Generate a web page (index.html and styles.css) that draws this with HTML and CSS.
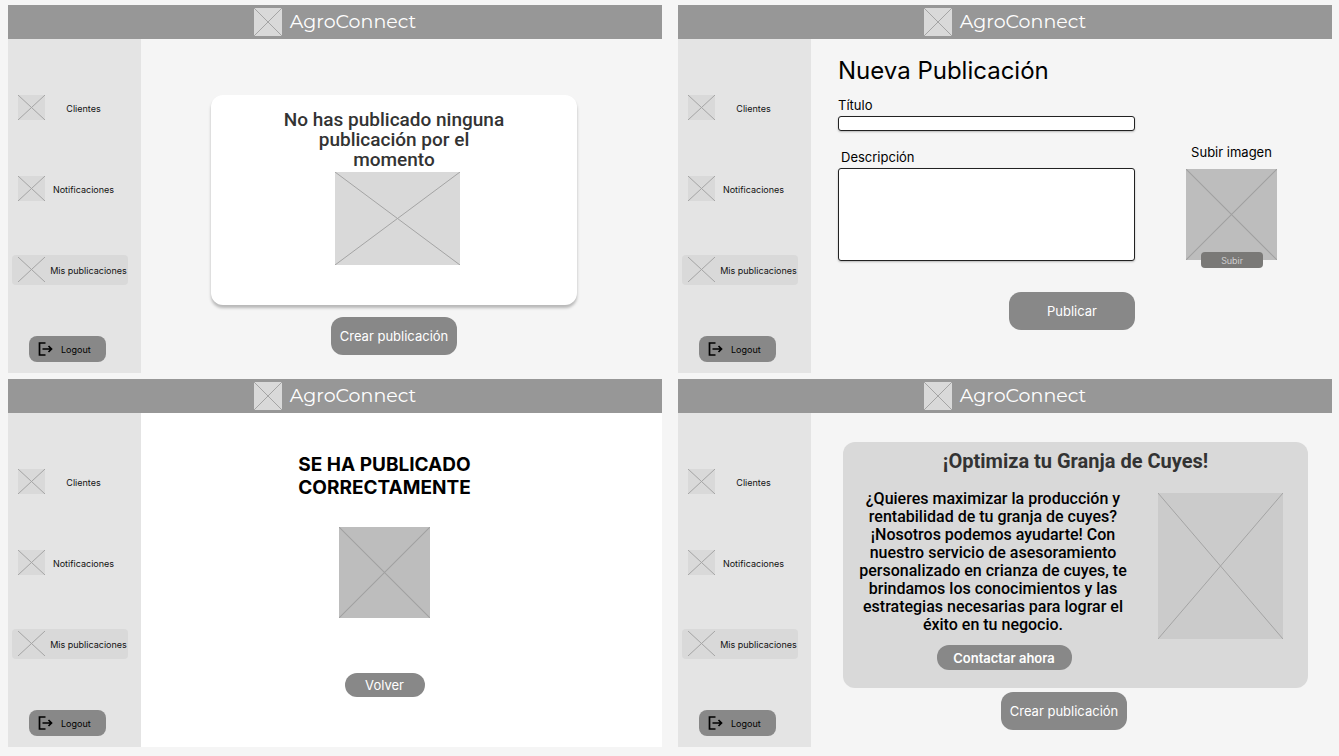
FILE: index.html
```html
<!DOCTYPE html>
<html lang="es">
<head>
<meta charset="utf-8">
<title>AgroConnect</title>
<link rel="stylesheet" href="styles.css">
</head>
<body>
<svg class="sprite" aria-hidden="true">
  <symbol id="cross" viewBox="0 0 100 100" preserveAspectRatio="none">
    <path d="M0 0L100 100M100 0L0 100" fill="none" stroke="currentColor" vector-effect="non-scaling-stroke"/>
  </symbol>
  <symbol id="logout" viewBox="0 0 14 14">
    <path d="M7 1H1V13H7M4 7H13M10 4L13 7L10 10" fill="none" stroke="currentColor" stroke-width="1.7"/>
  </symbol>
</svg>
<div class="board">
  <section class="screen">
    <header class="topbar"><svg class="ph logo"><use href="#cross"/></svg><span class="brand">AgroConnect</span></header>
    <nav class="sidebar">
      <a class="item" href="#"><svg class="ph thumb"><use href="#cross"/></svg><span class="item-label">Clientes</span></a>
      <a class="item" href="#"><svg class="ph thumb"><use href="#cross"/></svg><span class="item-label">Notificaciones</span></a>
      <a class="item active" href="#"><svg class="ph thumb"><use href="#cross"/></svg><span class="item-label">Mis publicaciones</span></a>
      <button class="logout" type="button"><svg class="logout-icon"><use href="#logout"/></svg>Logout</button>
    </nav>
    <main class="content empty">
      <div class="empty-card">
        <h2 class="empty-title">No has publicado ninguna<br>publicación por el<br>momento</h2>
        <svg class="ph empty-image"><use href="#cross"/></svg>
      </div>
      <button class="btn" type="button">Crear publicación</button>
    </main>
  </section>

  <section class="screen">
    <header class="topbar"><svg class="ph logo"><use href="#cross"/></svg><span class="brand">AgroConnect</span></header>
    <nav class="sidebar">
      <a class="item" href="#"><svg class="ph thumb"><use href="#cross"/></svg><span class="item-label">Clientes</span></a>
      <a class="item" href="#"><svg class="ph thumb"><use href="#cross"/></svg><span class="item-label">Notificaciones</span></a>
      <a class="item active" href="#"><svg class="ph thumb"><use href="#cross"/></svg><span class="item-label">Mis publicaciones</span></a>
      <button class="logout" type="button"><svg class="logout-icon"><use href="#logout"/></svg>Logout</button>
    </nav>
    <main class="content">
      <form class="form">
        <div class="fields">
          <h1 class="form-title">Nueva Publicación</h1>
          <label class="label" for="titulo">Título</label>
          <input class="field" id="titulo" type="text">
          <label class="label label-desc" for="descripcion">Descripción</label>
          <textarea class="field area" id="descripcion"></textarea>
          <button class="btn publish" type="button">Publicar</button>
        </div>
        <div class="upload">
          <span class="label">Subir imagen</span>
          <div class="upload-box">
            <svg class="ph dark square"><use href="#cross"/></svg>
            <button class="upload-btn" type="button">Subir</button>
          </div>
        </div>
      </form>
    </main>
  </section>

  <section class="screen">
    <header class="topbar"><svg class="ph logo"><use href="#cross"/></svg><span class="brand">AgroConnect</span></header>
    <nav class="sidebar">
      <a class="item" href="#"><svg class="ph thumb"><use href="#cross"/></svg><span class="item-label">Clientes</span></a>
      <a class="item" href="#"><svg class="ph thumb"><use href="#cross"/></svg><span class="item-label">Notificaciones</span></a>
      <a class="item active" href="#"><svg class="ph thumb"><use href="#cross"/></svg><span class="item-label">Mis publicaciones</span></a>
      <button class="logout" type="button"><svg class="logout-icon"><use href="#logout"/></svg>Logout</button>
    </nav>
    <main class="content done">
      <h2 class="done-title">SE HA PUBLICADO<br>CORRECTAMENTE</h2>
      <svg class="ph dark square"><use href="#cross"/></svg>
      <button class="pill back" type="button">Volver</button>
    </main>
  </section>

  <section class="screen">
    <header class="topbar"><svg class="ph logo"><use href="#cross"/></svg><span class="brand">AgroConnect</span></header>
    <nav class="sidebar">
      <a class="item" href="#"><svg class="ph thumb"><use href="#cross"/></svg><span class="item-label">Clientes</span></a>
      <a class="item" href="#"><svg class="ph thumb"><use href="#cross"/></svg><span class="item-label">Notificaciones</span></a>
      <a class="item active" href="#"><svg class="ph thumb"><use href="#cross"/></svg><span class="item-label">Mis publicaciones</span></a>
      <button class="logout" type="button"><svg class="logout-icon"><use href="#logout"/></svg>Logout</button>
    </nav>
    <main class="content post">
      <article class="post-card">
        <h2 class="post-title">¡Optimiza tu Granja de Cuyes!</h2>
        <div class="post-body">
          <div class="post-copy">
            <p class="post-text">¿Quieres maximizar la producción y rentabilidad de tu granja de cuyes? ¡Nosotros podemos ayudarte! Con nuestro servicio de asesoramiento personalizado en crianza de cuyes, te brindamos los conocimientos y las estrategias necesarias para lograr el éxito en tu negocio.</p>
            <button class="pill contact" type="button">Contactar ahora</button>
          </div>
          <svg class="ph mid post-image"><use href="#cross"/></svg>
        </div>
      </article>
      <button class="btn" type="button">Crear publicación</button>
    </main>
  </section>
</div>
</body>
</html>
```
FILE: styles.css
```css
* { box-sizing: border-box; }

body {
  margin: 0;
  background: #f5f5f5;
  color: #000;
  font-family: Inter, "Liberation Sans", sans-serif;
}

h1, h2, p { margin: 0; }
button { border: 0; padding: 0; font-family: inherit; cursor: pointer; }
.sprite { position: absolute; width: 0; height: 0; }

.board {
  display: grid;
  grid-template-columns: 1fr 1fr;
  grid-auto-rows: minmax(368px, auto);
  gap: 6px 16px;
  padding: 5px 7px 9px 8px;
}

.screen {
  display: grid;
  grid-template-columns: 133px 1fr;
  grid-template-rows: auto 1fr;
}

.topbar {
  grid-column: 1 / -1;
  display: flex;
  align-items: center;
  justify-content: center;
  gap: 8px;
  padding: 3px 0;
  background: #979797;
}
.brand {
  color: #fff;
  font-family: Montserrat, Inter, sans-serif;
  font-size: 19px;
  font-weight: 400;
  line-height: 28px;
}

/* Crossed placeholder boxes */
.ph { display: block; flex: none; background: #d9d9d9; color: #a4a4a4; }
.dark { background: #bdbdbd; color: #a0a0a0; }
.mid { background: #cbcbcb; }
.logo { width: 28px; height: 28px; }
.thumb { width: 27px; height: 25px; margin-bottom: 2px; }
.square { width: 91px; height: 91px; }

.sidebar {
  display: flex;
  flex-direction: column;
  align-items: flex-start;
  gap: 51px;
  padding: 54px 4px 11px;
  background: #e4e4e4;
}
.item {
  display: flex;
  align-items: center;
  gap: 4px;
  height: 30px;
  padding-left: 6px;
  border-radius: 4px;
  color: #111;
  font-size: 9px;
  line-height: 12px;
  text-decoration: none;
}
.item-label { min-width: 69px; padding-top: 2px; text-align: center; white-space: nowrap; }
.active { background: #d9d9d9; }
.active .item-label { min-width: 79px; }
.logout {
  display: flex;
  align-items: center;
  gap: 8px;
  width: 77px;
  height: 26px;
  margin-left: 17px;
  padding-left: 9px;
  border-radius: 8px;
  background: #888;
  color: #000;
  font-size: 9px;
}
.logout-icon { width: 15px; height: 14px; }

.btn {
  width: 126px;
  height: 38px;
  border-radius: 12px;
  background: #888;
  color: #fff;
  font-size: 13px;
}
.pill { border-radius: 12px; background: #888; color: #fff; font-size: 13px; }

.content { display: flex; flex-direction: column; align-items: center; }

.empty { gap: 12px; padding: 56px 85px 0 70px; }
.empty-card {
  display: flex;
  flex-direction: column;
  align-items: center;
  align-self: stretch;
  min-height: 210px;
  padding: 15px 24px;
  border-radius: 12px;
  background: #fff;
  box-shadow: 0 3px 3px rgba(0, 0, 0, 0.25);
}
.empty-title {
  color: #333;
  font-family: Roboto, sans-serif;
  font-size: 19px;
  font-weight: 500;
  line-height: 20px;
  text-align: center;
}
.empty-image { width: 125px; height: 93px; margin: 2px 0 0 7px; }

.form {
  display: grid;
  grid-template-columns: 1fr 91px;
  gap: 51px;
  align-self: stretch;
  padding: 16px 55px 0 27px;
}
.fields { display: flex; flex-direction: column; }
.form-title { font-size: 24px; font-weight: 400; line-height: 32px; }
.label { font-size: 13px; line-height: 16px; }
.fields .label { margin-top: 10px; }
.fields .label-desc { margin: 18px 0 0 3px; }
.field {
  height: 15px;
  margin-top: 3px;
  padding: 0 4px;
  border: 1px solid #222;
  border-radius: 3px;
  background: #fff;
  font-family: inherit;
  font-size: 10px;
  box-shadow: 0 1px 2px rgba(0, 0, 0, 0.25);
}
.area { height: 93px; resize: none; }
.publish { align-self: flex-end; margin-top: 31px; }
.upload {
  display: flex;
  flex-direction: column;
  align-items: center;
  gap: 9px;
  padding-top: 89px;
  white-space: nowrap;
}
.upload-box { position: relative; }
.upload-btn {
  position: absolute;
  left: 15px;
  bottom: -8px;
  width: 62px;
  height: 16px;
  border-radius: 4px;
  background: #7a7977;
  color: #e4e4e4;
  font-size: 9px;
  font-weight: 300;
}

.done { padding: 40px 34px 0 0; background: #fff; }
.done-title { margin-bottom: 28px; font-size: 19px; font-weight: 700; line-height: 23px; text-align: center; }
.back { width: 80px; height: 24px; margin-top: 55px; }

.post { gap: 4px; padding: 29px 24px 0 32px; }
.post > .btn { margin-right: 23px; }
.post-card {
  align-self: stretch;
  padding: 7px 25px 18px 15px;
  border-radius: 12px;
  background: #d9d9d9;
  font-family: Roboto, sans-serif;
}
.post-title { padding-left: 10px; color: #333; font-size: 20px; font-weight: 700; line-height: 24px; text-align: center; }
.post-body { display: flex; justify-content: space-between; padding-top: 17px; }
.post-copy { display: flex; flex-direction: column; align-items: center; }
.post-text { width: 270px; font-size: 16px; font-weight: 500; line-height: 18px; text-align: center; }
.post-image { width: 125px; height: 146px; margin-top: 3px; }
.contact { width: 135px; height: 25px; margin: 11px 0 0 22px; font-family: Inter, sans-serif; font-weight: 600; }
```
